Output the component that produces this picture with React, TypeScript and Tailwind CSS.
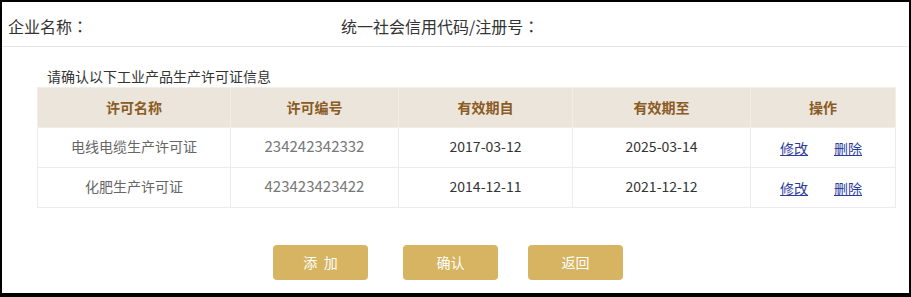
import React from 'react';

const rows = [
  { name: '电线电缆生产许可证', code: '234242342332', from: '2017-03-12', to: '2025-03-14' },
  { name: '化肥生产许可证', code: '423423423422', from: '2014-12-11', to: '2021-12-12' },
];

const headers = ['许可名称', '许可编号', '有效期自', '有效期至', '操作'];

// full-width colon, centred like the reference
const Colon = () => <span className="font-['Noto_Sans_CJK_JP']">：</span>;

const App: React.FC = () => {
  return (
    <div
      className="w-[911px] h-[297px] bg-black pt-[2px] pl-[2px] pr-[2px] pb-[4px]"
      style={{ fontFamily: '"Noto Sans CJK SC", "Noto Sans", sans-serif' }}
    >
      <div className="w-full h-full bg-white flex flex-col">
        {/* 企业信息 */}
        <div className="h-[45px] pt-[4px] flex items-center border-b border-[#e6e6e6] text-[16px] text-[#333]">
          <span className="ml-[6px] w-[333px]">
            企业名称
            <Colon />
          </span>
          <span>
            统一社会信用代码/注册号
            <Colon />
          </span>
        </div>

        <div className="mt-[18px] ml-[45px] h-[22px] flex items-center text-[14px] text-[#333]">
          请确认以下工业产品生产许可证信息
        </div>

        <table className="ml-[35px] w-[858px] table-fixed border-collapse text-[14px]">
          <colgroup>
            <col className="w-[193px]" />
            <col className="w-[168px]" />
            <col className="w-[174px]" />
            <col className="w-[178px]" />
            <col className="w-[145px]" />
          </colgroup>
          <thead>
            <tr className="h-[40px] bg-[#ebe5dc]">
              {headers.map((h) => (
                <th key={h} className="font-bold text-[#8a5b22] border border-[#f1ede7] text-center">
                  {h}
                </th>
              ))}
            </tr>
          </thead>
          <tbody>
            {rows.map((r) => (
              <tr key={r.code} className="h-[40px]">
                <td className="border border-[#ececec] text-center text-[#666] pb-[2px]">{r.name}</td>
                <td className="border border-[#ececec] text-center text-[#777] text-[15px] pb-[2px]">{r.code}</td>
                <td className="border border-[#ececec] text-center text-[#333] pb-[2px]">{r.from}</td>
                <td className="border border-[#ececec] text-center text-[#333] pb-[2px]">{r.to}</td>
                <td className="border border-[#ececec] text-center">
                  <div className="flex justify-center gap-[26px] pt-[2px] pr-[4px] text-[#2b3c9c]">
                    <a href="#" className="underline">修改</a>
                    <a href="#" className="underline">删除</a>
                  </div>
                </td>
              </tr>
            ))}
          </tbody>
        </table>

        <div className="mt-[37px] ml-[271px] flex text-[14px] text-white">
          <button className="w-[95px] h-[35px] rounded-[4px] bg-[#d6b461] whitespace-pre">添  加</button>
          <button className="ml-[35px] w-[95px] h-[35px] rounded-[4px] bg-[#d6b461]">确认</button>
          <button className="ml-[30px] w-[95px] h-[35px] rounded-[4px] bg-[#d6b461]">返回</button>
        </div>
      </div>
    </div>
  );
};

export default App;
